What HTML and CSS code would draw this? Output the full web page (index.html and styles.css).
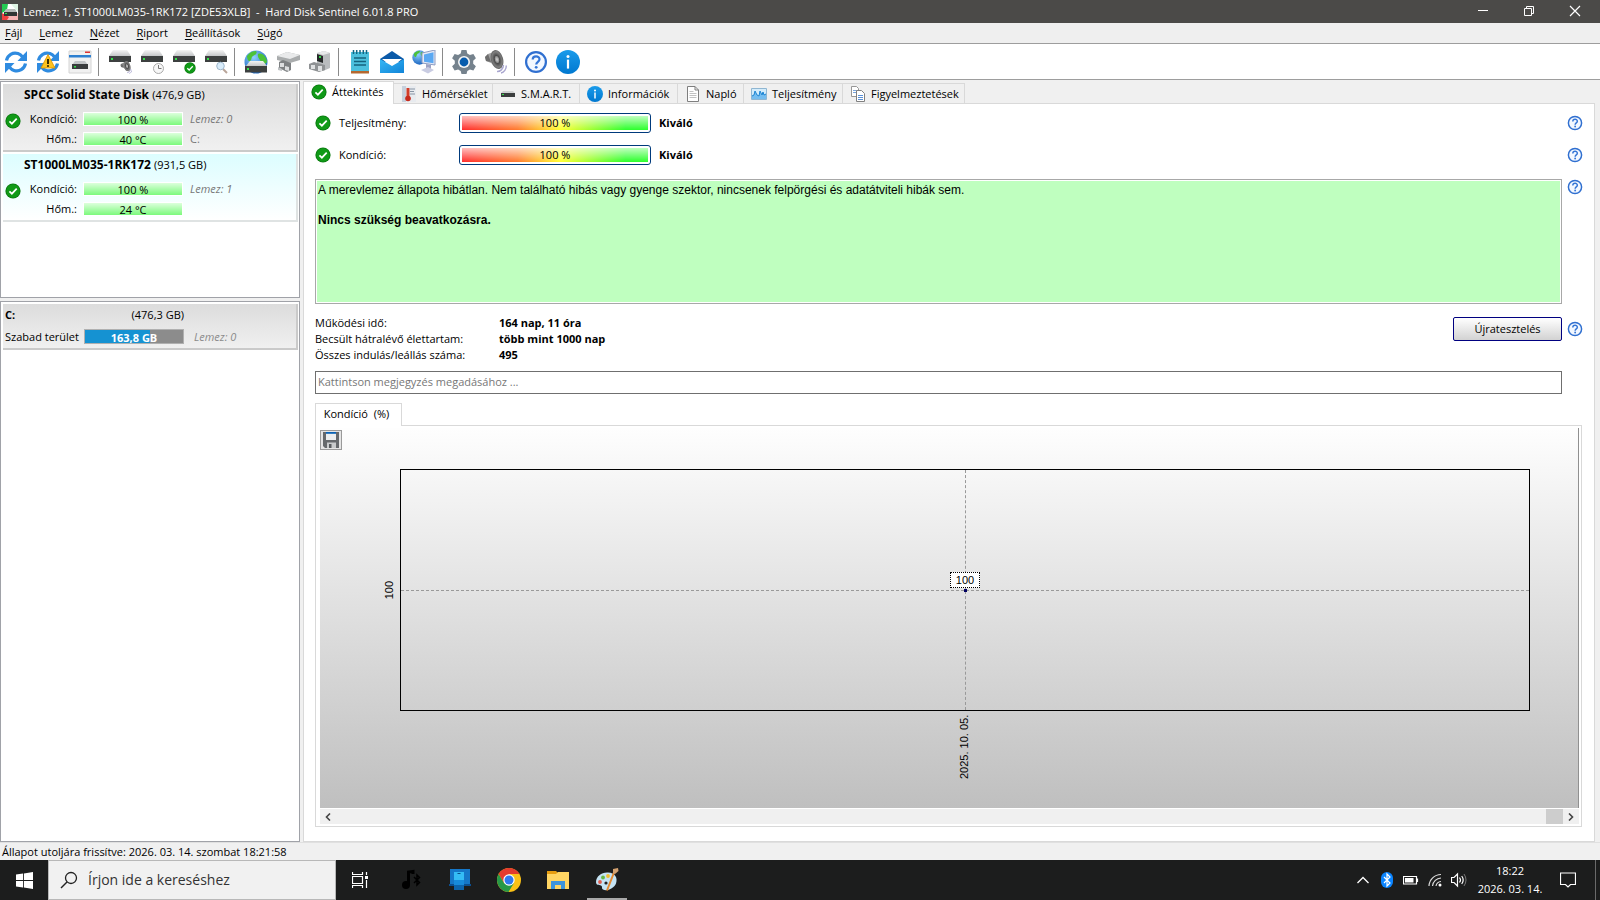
FILE: index.html
```html
<!DOCTYPE html>
<html lang="hu">
<head>
<meta charset="utf-8">
<title>Hard Disk Sentinel</title>
<link rel="stylesheet" href="styles.css">
</head>
<body>
<svg class="defs" aria-hidden="true">
  <defs>
    <linearGradient id="gTop" x1="0" y1="0" x2="0" y2="1"><stop offset="0" stop-color="#f4f4f4"/><stop offset="1" stop-color="#c4c6c8"/></linearGradient>
    <linearGradient id="gBlue" x1="0" y1="0" x2="0" y2="1"><stop offset="0" stop-color="#1a9bea"/><stop offset="1" stop-color="#0078d0"/></linearGradient>
    <linearGradient id="gMail" x1="0" y1="0" x2="1" y2="1"><stop offset="0" stop-color="#35b8f5"/><stop offset="1" stop-color="#1184d8"/></linearGradient>
    <radialGradient id="gGlobe" cx=".4" cy=".3" r=".8"><stop offset="0" stop-color="#8fd0ff"/><stop offset="1" stop-color="#0d58b8"/></radialGradient>
    <radialGradient id="gCone"><stop offset="0" stop-color="#d8d8d8"/><stop offset=".35" stop-color="#8b8b8b"/><stop offset=".45" stop-color="#4a4a4a"/><stop offset="1" stop-color="#909090"/></radialGradient>
  </defs>
  <symbol id="ok" viewBox="0 0 16 16"><circle cx="8" cy="8" r="7.6" fill="#0b7a10"/><circle cx="8" cy="8" r="6.7" fill="#109a17"/><path d="M4.4 8.3l2.5 2.4 4.8-5" fill="none" stroke="#fff" stroke-width="1.7"/></symbol>
  <symbol id="help" viewBox="0 0 24 24"><circle cx="12" cy="12" r="9.9" fill="#f3f8ff" stroke="#2f6fd0" stroke-width="2.2"/><path d="M8.7 9.6c0-4.2 6.8-4.2 6.8-.3 0 2.5-3.3 2.6-3.3 5.2" fill="none" stroke="#3475d6" stroke-width="2.2"/><circle cx="12.2" cy="17.3" r="1.4" fill="#3475d6"/></symbol>
  <symbol id="info" viewBox="0 0 24 24"><circle cx="12" cy="12" r="12" fill="url(#gBlue)"/><circle cx="12" cy="6.6" r="1.5" fill="#fff"/><path d="M12 9.6v9" stroke="#fff" stroke-width="2.2"/></symbol>
  <symbol id="disk" viewBox="0 0 24 24"><path d="M5 0h14l4 6H1z" fill="url(#gTop)"/><path d="M1 6h22v6H1z" fill="#3d4040"/><path d="M3 8h2v2H3z" fill="#35e04a"/></symbol>
  <symbol id="sync" viewBox="0 0 24 24"><path d="M2.500 10.500C3.500 5 9 1.800 14 3.600c2 .7 3.300 1.800 4.400 3.200" fill="none" stroke="#2f8be0" stroke-width="3.200"/><path d="M23 1v10H13.500z" fill="#2f8be0"/><path d="M21.500 13.500C20.500 19 15 22.200 10 20.400c-2-.7-3.300-1.800-4.400-3.200" fill="none" stroke="#2f8be0" stroke-width="3.200"/><path d="M1 23V13h9.500z" fill="#2f8be0"/></symbol>
  <symbol id="speaker" viewBox="0 0 24 24"><path d="M1 7l3-3 8-3 6 17-3 1-8-6-5-2z" fill="#a3a3a3"/><path d="M1 7l3-3 3 8-5-1z" fill="#6d6d6d"/><ellipse cx="13" cy="9.500" rx="5.500" ry="9" fill="url(#gCone)" stroke="#6c6c6c" stroke-width="1.200" transform="rotate(-16 13 9.500)"/><path d="M13 21.500c3 .3 6.500-2.500 6.500-6.500M17 23c3-.7 5.500-4 5.300-7.500" fill="none" stroke="#a9a6cf" stroke-width="1.400"/></symbol>
  <symbol id="globe" viewBox="0 0 24 24"><circle cx="12" cy="12" r="11.500" fill="url(#gGlobe)"/><path d="M3 6c3-4 6-5 9-5 2 2-1 4-3 5s-1 4-3 5-3-3-3-5zM14 4c4-2 9 3 9 8-2 3-5 3-6 0s-4-4-3-8z" fill="#4cc238"/></symbol>
  <symbol id="page" viewBox="0 0 16 16"><path d="M2.500.5h7.500l3.500 3.500v11.500h-11z" fill="#fff" stroke="#7f7f7f"/><path d="M10 .5v3.500h3.500" fill="none" stroke="#7f7f7f"/><path d="M4.500 5.500h4M4.500 7.500h7M4.500 9.500h7M4.500 11.500h7" stroke="#c2c2c2"/></symbol>
</svg>

<header class="titlebar">
  <svg class="app-icon" viewBox="0 0 16 16"><path d="M0 0h16v16H0z" fill="#fff"/><path d="M0 0h6L5 6 0 9z" fill="#24c952"/><path d="M0 16h16V9L6 12z" fill="#f7b5b5"/><path d="M0 9l7 4-2 3H0z" fill="#ef4040"/><path d="M9 0h7v8z" fill="#dff5e5"/><path d="M4 5h9l2 3H2z" fill="#b6b9b8"/><path d="M2 8h13v4H2z" fill="#313635"/><path d="M3 9h2v1H3z" fill="#35e04a"/></svg>
  <span class="title">Lemez: 1, ST1000LM035-1RK172 [ZDE53XLB]&nbsp; -&nbsp; Hard Disk Sentinel 6.01.8 PRO</span>
  <div class="window-buttons">
    <button aria-label="Kis méret"><svg viewBox="0 0 12 12"><path d="M1 5.500h10" stroke="#fff"/></svg></button>
    <button aria-label="Előző méret"><svg viewBox="0 0 12 12"><path d="M1.500 3.500h7v7h-7zM3.500 3.500v-2h7v7h-2" fill="none" stroke="#fff"/></svg></button>
    <button aria-label="Bezárás"><svg viewBox="0 0 12 12"><path d="M1 1l10 10M11 1L1 11" stroke="#fff" stroke-width="1.200"/></svg></button>
  </div>
</header>

<nav class="menubar">
  <button><u>F</u>ájl</button><button><u>L</u>emez</button><button><u>N</u>ézet</button><button><u>R</u>iport</button><button><u>B</u>eállítások</button><button><u>S</u>úgó</button>
</nav>

<div class="toolbar">
  <button aria-label="Frissítés"><svg viewBox="0 0 24 24"><use href="#sync"/></svg></button>
  <button aria-label="Gyors frissítés"><svg viewBox="0 0 24 24"><use href="#sync"/><path d="M12 4.500l7 13.500H5z" fill="#ffc31f" stroke="#d99100" stroke-width=".8"/><path d="M12 9v5" stroke="#3a2b00" stroke-width="2"/><circle cx="12" cy="16" r="1.100" fill="#3a2b00"/></svg></button>
  <button aria-label="Ablak"><svg viewBox="0 0 24 24"><path d="M1 1h22v22H1z" fill="#f1f1f1" stroke="#d4d4d4"/><path d="M1 5h22v2.500H1z" fill="#2d7fd0"/><path d="M17 1.500h5v1.500h-5z" fill="#d33"/><path d="M7 11h10l3 4H4z" fill="#c2c5c7"/><path d="M4 14h16v5H4z" fill="#3b3e3f"/><path d="M6 16h2v1.500H6z" fill="#35e04a"/></svg></button>
  <span class="sep"></span>
  <button aria-label="Lemez zaj"><svg viewBox="0 0 24 24"><use href="#disk"/><use href="#speaker" x="12" y="11" width="13" height="13"/></svg></button>
  <button aria-label="Lemez idő"><svg viewBox="0 0 24 24"><use href="#disk"/><circle cx="18.500" cy="18.500" r="5" fill="#f7f7f7" stroke="#a9a9a9"/><path d="M18.500 15v3.500h3" fill="none" stroke="#777"/></svg></button>
  <button aria-label="Lemez teszt"><svg viewBox="0 0 24 24"><use href="#disk"/><use href="#ok" x="12" y="12" width="12" height="12"/></svg></button>
  <button aria-label="Lemez vizsgálat"><svg viewBox="0 0 24 24"><use href="#disk"/><path d="M19 19l4 4" stroke="#b9a59a" stroke-width="2"/><circle cx="16.500" cy="16" r="3.800" fill="#d9edfb" stroke="#9fb7cc"/></svg></button>
  <span class="sep"></span>
  <button aria-label="Hálózat"><svg viewBox="0 0 24 24"><use href="#globe"/><path d="M6 11h13l4 5H2z" fill="url(#gTop)"/><path d="M1 16h22v6.500H1z" fill="#3d4040"/><path d="M3 18h2v2H3z" fill="#35e04a"/></svg></button>
  <button aria-label="Külső eszköz"><svg viewBox="0 0 24 24"><path d="M1 6l10-4 13 3v5l-10 3L1 10z" fill="#a9acad"/><path d="M1 6l10-4 13 3-10 4z" fill="#e9eaeb"/><path d="M3 12l4-2 8 3v7l-4 2-8-4z" fill="#7d8082"/><path d="M4 13h4v4H4zM9 16l4 1v4l-4-1z" fill="#dcdedf"/><path d="M2 17l4 2v2l-4-1z" fill="#bfc2c4"/></svg></button>
  <button aria-label="Csatlakozó"><svg viewBox="0 0 24 24"><path d="M9 3l7-2 6 2v15l-7 3-6-4z" fill="#b9bcbe"/><path d="M9 3l7-2 6 2-7 2z" fill="#e8e9ea"/><path d="M9 4l6 2v7l-6-2z" fill="#252828"/><path d="M11 6h2v2h-2z" fill="#35d04a"/><path d="M1 14l5-2 11 3v5l-6 2-10-3z" fill="#8f9294"/><path d="M3 15h4v4H3zM10 16h4v5h-4z" fill="#dfe1e2"/></svg></button>
  <span class="sep"></span>
  <button aria-label="Jelentés"><svg viewBox="0 0 24 24"><path d="M3 2h18v19H3z" fill="#4cc0dd"/><path d="M3 21h18v2.500H3z" fill="#b5682f"/><path d="M6 8h12M6 11.500h12M6 15h12" stroke="#15637e" stroke-width="1.400"/><path d="M5.500 0v4M8.700 0v4M12 0v4M15.300 0v4M18.500 0v4" stroke="#116684" stroke-width="1.500"/></svg></button>
  <button aria-label="E-mail"><svg viewBox="0 0 24 24"><path d="M0 9l12-8 12 8v3H0z" fill="#0b5aa8"/><path d="M2 9h20l-10 8z" fill="#fff"/><path d="M0 9l12 7 12-7v14H0z" fill="url(#gMail)"/></svg></button>
  <button aria-label="Távoli gép"><svg viewBox="0 0 24 24"><use href="#globe" width="15" height="15"/><path d="M10 3l13-3v15l-13-2z" fill="#e5e9f6" stroke="#8d9cc2"/><path d="M12 4.500l9.500-2.300v11l-9.500-1.500z" fill="#5aa8f2"/><path d="M14 14l5 1v4l-5-1z" fill="#9da2c4"/><path d="M9 20l7-3 6 3-6 3.500z" fill="#c9cce2"/></svg></button>
  <span class="sep"></span>
  <button aria-label="Beállítások"><svg viewBox="0 0 24 24"><path d="M9.500 0h5l.8 3.600 2.600 1.500 3.500-1.100 2.500 4.300-2.700 2.500v3l2.700 2.500-2.500 4.300-3.500-1.100-2.600 1.500-.8 3h-5l-.8-3-2.600-1.500-3.500 1.100-2.500-4.300 2.700-2.500v-3L.1 8.300 2.600 4l3.500 1.100 2.600-1.500z" fill="#75828d"/><circle cx="12" cy="12" r="6" fill="#f5f5f5"/><circle cx="12" cy="12" r="4.400" fill="#075cad"/></svg></button>
  <button aria-label="Hang"><svg viewBox="0 0 24 24"><use href="#speaker"/></svg></button>
  <span class="sep"></span>
  <button aria-label="Súgó"><svg viewBox="0 0 24 24"><use href="#help"/></svg></button>
  <button aria-label="Névjegy"><svg viewBox="0 0 24 24"><use href="#info"/></svg></button>
</div>

<div class="workspace">
  <aside class="sidebar">
    <section class="panel disks">
      <article class="card">
        <h2>SPCC Solid State Disk <span>(476,9 GB)</span></h2>
        <div class="card-body">
          <svg class="i16"><use href="#ok"/></svg>
          <div class="metrics">
            <span class="name">Kondíció:</span><span class="meter">100 %</span><i>Lemez: 0</i>
            <span class="name">Hőm.:</span><span class="meter">40 °C</span><b>C:</b>
          </div>
        </div>
      </article>
      <article class="card selected">
        <h2>ST1000LM035-1RK172 <span>(931,5 GB)</span></h2>
        <div class="card-body">
          <svg class="i16"><use href="#ok"/></svg>
          <div class="metrics">
            <span class="name">Kondíció:</span><span class="meter">100 %</span><i>Lemez: 1</i>
            <span class="name">Hőm.:</span><span class="meter">24 °C</span>
          </div>
        </div>
      </article>
    </section>
    <section class="panel volumes">
      <article class="card volume">
        <b>C:</b><span class="capacity">(476,3 GB)</span><span></span>
        <span>Szabad terület</span><span class="usage">163,8 GB</span><i>Lemez: 0</i>
      </article>
    </section>
  </aside>

  <main class="content">
    <div class="tabs" role="tablist">
      <button class="tab t1 active" role="tab" aria-selected="true"><svg class="i16"><use href="#ok"/></svg>Áttekintés</button>
      <button class="tab t2" role="tab"><svg class="i16" viewBox="0 0 16 16"><path d="M1 0h14v16H1z" fill="#e8ebef"/><path d="M1 0h4v16H1z" fill="#c6d0dc"/><path d="M9 3h5M9 5.500h4M9 8h5" stroke="#8895a5"/><path d="M7 2v10" stroke="#d23c28" stroke-width="3"/><circle cx="7" cy="12.500" r="2.800" fill="#c62a1c"/></svg>Hőmérséklet</button>
      <button class="tab t3" role="tab"><svg class="i16" viewBox="0 0 16 16"><path d="M3 5h10l2 2H1z" fill="#cfd1d1"/><path d="M1 7h14v4H1z" fill="#3b3e3e"/><path d="M2 8h2v1H2z" fill="#35e04a"/></svg>S.M.A.R.T.</button>
      <button class="tab t4" role="tab"><svg class="i16"><use href="#info" width="16" height="16"/></svg>Információk</button>
      <button class="tab t5" role="tab"><svg class="i16"><use href="#page"/></svg>Napló</button>
      <button class="tab t6" role="tab"><svg class="i16" viewBox="0 0 16 16"><path d="M.5 2.500h15v11H.5z" fill="#d3ecfb" stroke="#8fb6d2"/><path d="M1 10l2-1 1-4 2 4 2 1 1-5 2 4 1-3 1 3 2-1v5H1z" fill="#74bdf0"/><path d="M1 10l2-1 1-4 2 4 2 1 1-5 2 4 1-3 1 3 2-1" fill="none" stroke="#1b84d3"/></svg>Teljesítmény</button>
      <button class="tab t7" role="tab"><svg class="i16" viewBox="0 0 16 16"><path d="M1.500.5h5l2 2v8h-7z" fill="#fff" stroke="#989898"/><path d="M3 4.500h4M3 6.500h4" stroke="#79a6dd"/><path d="M6.500 4.500h5l3 3v8h-8z" fill="#fff" stroke="#808080"/><path d="M8 9.500h5M8 11.500h5M8 13.500h5" stroke="#5a90d6"/></svg>Figyelmeztetések</button>
    </div>

    <div class="page">
      <div class="rating">
        <svg class="i16"><use href="#ok"/></svg><span class="label">Teljesítmény:</span><div class="gauge"><span>100 %</span></div><b>Kiváló</b>
        <button class="help" aria-label="Súgó"><svg class="i16"><use href="#help"/></svg></button>
      </div>
      <div class="rating">
        <svg class="i16"><use href="#ok"/></svg><span class="label">Kondíció:</span><div class="gauge"><span>100 %</span></div><b>Kiváló</b>
        <button class="help" aria-label="Súgó"><svg class="i16"><use href="#help"/></svg></button>
      </div>
      <div class="row">
        <div class="message"><p>A merevlemez állapota hibátlan. Nem található hibás vagy gyenge szektor, nincsenek felpörgési és adatátviteli hibák sem.</p><p><b>Nincs szükség beavatkozásra.</b></p></div>
        <button class="help" aria-label="Súgó"><svg class="i16"><use href="#help"/></svg></button>
      </div>
      <div class="row facts-row">
        <dl class="facts">
          <dt>Működési idő:</dt><dd>164 nap, 11 óra</dd>
          <dt>Becsült hátralévő élettartam:</dt><dd>több mint 1000 nap</dd>
          <dt>Összes indulás/leállás száma:</dt><dd>495</dd>
        </dl>
        <button class="retest">Újratesztelés</button>
        <button class="help retest-help" aria-label="Súgó"><svg class="i16"><use href="#help"/></svg></button>
      </div>
      <input class="comment" type="text" aria-label="Megjegyzés" placeholder="Kattintson megjegyzés megadásához ...">

      <div class="chart-area">
        <button class="chart-tab">Kondíció&nbsp; (%)</button>
        <div class="chart-frame">
          <div class="chart">
            <button class="save" aria-label="Mentés"><svg viewBox="0 0 16 16"><path d="M0 0h16v16H2l-2-2z" fill="#66696c"/><path d="M3 0h10v8H3z" fill="#eceeef"/><path d="M3 0h10v1.800H3z" fill="#0a62b5"/><path d="M4 10.500h9V16H4z" fill="#c9cbcc"/><path d="M6 12h2.500v4H6z" fill="#585b5e"/></svg></button>
            <div class="plot-row">
              <span class="vertical y-label">100</span>
              <div class="plot">
                <span class="h-line"></span><span class="v-line"></span><span class="point"></span><span class="value">100</span>
              </div>
            </div>
            <div class="x-axis"><span class="vertical">2025. 10. 05.</span></div>
          </div>
          <div class="scrollbar">
            <button aria-label="Balra"><svg viewBox="0 0 8 8"><path d="M6 .5L2.500 4 6 7.500" fill="none" stroke="#444" stroke-width="1.600"/></svg></button>
            <span class="thumb"></span>
            <button aria-label="Jobbra"><svg viewBox="0 0 8 8"><path d="M2 .5L5.500 4 2 7.500" fill="none" stroke="#444" stroke-width="1.600"/></svg></button>
          </div>
        </div>
      </div>
    </div>
  </main>
</div>

<footer class="statusbar">Állapot utoljára frissítve: 2026. 03. 14. szombat 18:21:58</footer>

<div class="taskbar">
  <button class="start" aria-label="Start"><svg viewBox="0 0 16 16"><path d="M0 2.300L6.600 1.400v6.200H0zM7.400 1.300L16 0v7.600H7.400zM0 8.400h6.600v6.200L0 13.700zM7.400 8.400H16V16l-8.600-1.300z" fill="#fff"/></svg></button>
  <label class="search"><svg viewBox="0 0 18 18"><circle cx="11" cy="7" r="5.500" fill="none" stroke="#222" stroke-width="1.300"/><path d="M7 11l-6 6" stroke="#222" stroke-width="1.400"/></svg><input type="text" aria-label="Keresés" placeholder="Írjon ide a kereséshez"></label>
  <div class="apps">
    <button class="task-view" aria-label="Feladatnézet"><svg class="i16" viewBox="0 0 16 16"><path d="M.5 4.500h10v7H.5zM.5 0v2.500h10V0M.5 16v-2.500h10V16M14.500 0v3M14.500 8v8" fill="none" stroke="#fff" stroke-width="1.200"/><path d="M13 4h3v3h-3z" fill="#fff"/></svg></button>
    <button aria-label="Zene"><svg viewBox="0 0 24 24"><path d="M9.500 17V4l4.500-.5v2.500" fill="none" stroke="#000" stroke-width="3"/><circle cx="7" cy="17" r="4" fill="#000"/><path d="M15 9l5.500 5.500L18 17V7l2.500 2.500L15 15" fill="none" stroke="#000" stroke-width="1.500"/></svg></button>
    <button aria-label="Telefon"><svg viewBox="0 0 24 24"><path d="M2 1h20v16H2z" fill="#1577c8"/><path d="M1 16h22v2H1z" fill="#0b4f91"/><path d="M6 4h10v18H6z" fill="#34bdf5"/><path d="M6 12h10v10H6z" fill="#178bdc"/><path d="M6 17h10v5H6z" fill="#0d64ac"/><path d="M9.500 5.500h3" stroke="#075288"/></svg></button>
    <button aria-label="Chrome"><svg viewBox="0 0 24 24"><circle cx="12" cy="12" r="12" fill="#fbc116"/><path d="M1.600 6A12 12 0 0 1 22.400 6H12L7 15z" fill="#e33b2e"/><path d="M1.600 6A12 12 0 0 0 11.500 24L17 15l-5 2-5-2z" fill="#279847"/><circle cx="12" cy="12" r="5.700" fill="#fff"/><circle cx="12" cy="12" r="4.500" fill="#2f79ed"/></svg></button>
    <button aria-label="Fájlkezelő"><svg viewBox="0 0 24 24"><path d="M1 3h9l2 2v4H1z" fill="#e69d10"/><path d="M1 6h9l2-2h11v17H1z" fill="#ffd563"/><path d="M5 13h14v8h-4v-4H9v4H5z" fill="#3d94dc"/></svg></button>
    <button class="running" aria-label="Paint"><svg viewBox="0 0 24 24"><path d="M1 14C1 8 7 4 13 4.500c7 .5 10 5 8 11-2 5-9 8-13 6-2-1 0-3-2-4s-5 0-5-3.500z" fill="#c5e3f3"/><circle cx="5" cy="14" r="1.900" fill="#e25e4e"/><circle cx="8" cy="9.500" r="1.900" fill="#66b846"/><circle cx="13" cy="8" r="1.900" fill="#f2bd2e"/><circle cx="11" cy="15" r="1.600" fill="#222"/><path d="M12 22.500l7-18" stroke="#e58a31" stroke-width="2"/><path d="M18 1l5-1 .5 3-3.500 3-2-1z" fill="#d3a170"/></svg></button>
  </div>
  <div class="tray">
    <button aria-label="Rejtett ikonok"><svg class="i16" viewBox="0 0 16 16"><path d="M2.500 11L8 5.500l5.500 5.500" fill="none" stroke="#fff" stroke-width="1.300"/></svg></button>
    <button aria-label="Bluetooth"><svg class="i16" viewBox="0 0 16 16"><rect x="2" width="12" height="16" rx="6" fill="#0a84ff"/><path d="M5 5l6 6-3 3V2l3 3-6 6" fill="none" stroke="#fff" stroke-width="1.200"/></svg></button>
    <button aria-label="Akkumulátor"><svg class="i16" viewBox="0 0 16 16"><path d="M.5 4.500h13v7.500H.5zM14.500 6.500v3.500" fill="none" stroke="#fff" stroke-width="1.200"/><path d="M2 6h8.500v4.500H2z" fill="#fff"/></svg></button>
    <button aria-label="Wi-Fi"><svg class="i16" viewBox="0 0 16 16"><path d="M2 14A12 12 0 0 1 14 2.500M5.500 14A9 9 0 0 1 14 6M9 14a5.500 5.500 0 0 1 5-4.500" fill="none" stroke="#ddd" stroke-width="1.200"/><circle cx="13" cy="13" r="1.500" fill="#fff"/></svg></button>
    <button aria-label="Hangerő"><svg class="i16" viewBox="0 0 16 16"><path d="M.5 5.500h2.500l3.500-3.500v12L3 10.500H.5z" fill="none" stroke="#fff" stroke-width="1.200"/><path d="M8.500 5.500q2 2.500 0 5M10.700 4q3 4 0 8" fill="none" stroke="#fff" stroke-width="1.200"/><path d="M13 2q4 6 0 12" fill="none" stroke="#777"/></svg></button>
    <div class="clock"><time>18:22</time><time>2026. 03. 14.</time></div>
    <button class="notes" aria-label="Értesítések"><svg class="i16" viewBox="0 0 16 16"><path d="M.5 1h15v11.500h-5L8 15l-2.500-2.500h-5z" fill="none" stroke="#fff" stroke-width="1.200"/></svg></button>
  </div>
</div>
</body>
</html>
```

FILE: styles.css
```css
* { box-sizing: border-box; }
body {
  margin: 0;
  height: 100vh;
  display: flex;
  flex-direction: column;
  overflow: hidden;
  background: #f0f0f0;
  color: #000;
  font: 11px/16px "Open Sans", "Noto Sans", sans-serif;
}
button {
  display: flex;
  align-items: center;
  justify-content: center;
  padding: 0;
  border: 0;
  background: none;
  color: inherit;
  font: inherit;
  white-space: nowrap;
}
.defs { position: absolute; width: 0; height: 0; }
.i16 { width: 16px; height: 16px; flex: none; }

.titlebar {
  display: flex;
  align-items: center;
  gap: 5px;
  height: 23px;
  padding: 0 2px;
  background: #4b4a48;
  color: #fff;
}
.app-icon { width: 16px; height: 16px; }
.window-buttons { display: flex; margin-left: auto; align-self: stretch; }
.window-buttons button { width: 46px; padding-bottom: 2px; }
.window-buttons svg { width: 12px; height: 12px; }

.menubar { display: flex; height: 20px; padding-left: 5px; gap: 17px; background: #efefef; }
.menubar u { text-underline-offset: 2px; }

.toolbar {
  display: flex;
  align-items: center;
  height: 37px;
  background: #fff;
  border-top: 1px solid #9d9d9d;
  border-bottom: 1px solid #9d9d9d;
}
.toolbar button { width: 32px; height: 32px; }
.toolbar svg { width: 24px; height: 24px; }
.sep { width: 8px; height: 28px; padding-left: 2px; }
.sep::before { content: ""; display: block; width: 1px; height: 100%; background: #8a8a8a; }

.workspace { flex: 1; min-height: 0; display: flex; gap: 3px; padding-top: 1px; }
.sidebar { width: 300px; display: flex; flex-direction: column; gap: 3px; }
.panel { background: #fff; border: 1px solid #a0a2a8; padding: 2px 1px 2px 2px; }
.disks { height: 217px; display: flex; flex-direction: column; gap: 2px; }
.volumes { flex: 1; }
.card {
  height: 68px;
  border-right: 2px solid #cacaca;
  border-bottom: 2px solid #cacaca;
  background: linear-gradient(#dcdcdc, #f0f0f0);
}
.card.selected { background: linear-gradient(#dcfdff, #fff); border-color: #dfe3e3; }
.card h2 { margin: 0; padding: 2px 0 0 21px; font-size: 12px; line-height: 18px; font-weight: 700; white-space: nowrap; }
.card h2 span { font-weight: 400; font-size: 11px; }
.card-body { display: flex; padding: 7px 0 0 2px; }
.card-body .i16 { margin-top: 2px; }
.metrics { display: grid; grid-template-columns: 56px 100px 1fr; column-gap: 6px; row-gap: 4px; align-items: center; }
.name { text-align: right; }
.card i { color: #8a8a8a; }
.metrics i, .metrics b { padding-left: 1px; font-weight: 400; color: #777; }
.meter {
  height: 14px;
  border: 1px solid #fff;
  background: linear-gradient(#dcffdc, #7cf97c);
  line-height: 14px;
  text-align: center;
}
.card.volume {
  height: 46px;
  display: grid;
  grid-template-columns: 74px 100px 1fr;
  column-gap: 5px;
  row-gap: 6px;
  align-content: start;
  padding: 3px 0 0 2px;
  background: linear-gradient(#dcdcdc, #f0f0f0);
  white-space: nowrap;
}
.volume .capacity { text-align: right; }
.volume i { padding-left: 5px; }
.usage {
  height: 15px;
  border: 1px solid #b0b0b0;
  background: linear-gradient(90deg, #1592d2 66%, #8c8c8c 66%);
  color: #fff;
  font-weight: 700;
  line-height: 15px;
  text-align: center;
}

.content { flex: 1; min-width: 0; display: flex; flex-direction: column; padding-right: 5px; }
.tabs { display: flex; align-items: flex-end; height: 22px; }
.tab {
  height: 20px;
  justify-content: flex-start;
  gap: 5px;
  padding-left: 7px;
  border: 1px solid #d9d9d9;
  border-width: 1px 1px 0 0;
}
.tab.active { height: 23px; margin-bottom: -1px; background: #fff; border-left-width: 1px; padding-bottom: 3px; z-index: 1; }
.t1 { width: 91px; }
.t2, .t6 { width: 99px; }
.t3 { width: 87px; }
.t4 { width: 98px; }
.t5 { width: 66px; }
.t7 { width: 122px; }
.page {
  flex: 1;
  min-height: 0;
  display: flex;
  flex-direction: column;
  padding: 3px 11px 14px;
  background: #fff;
  border: 1px solid #d9d9d9;
}
.rating { display: flex; align-items: center; height: 32px; }
.label { width: 128px; padding-left: 8px; }
.gauge {
  width: 192px;
  height: 20px;
  padding: 2px;
  margin-right: 8px;
  border: 1px solid #003a7c;
  border-radius: 3px;
  background: #fff;
}
.gauge span {
  display: block;
  line-height: 14px;
  text-align: center;
  background: linear-gradient(rgba(255, 255, 255, .7), rgba(255, 255, 255, 0)), linear-gradient(90deg, #ff2a2a, #ff7a2c 30%, #ffff30 53%, #2cff2c 88%);
}
.help { margin-left: auto; width: 16px; height: 16px; flex: none; }
.row { display: flex; gap: 5px; align-items: flex-start; margin-top: 8px; }
.message {
  flex: 1;
  height: 125px;
  padding: 3px 2px;
  border: 1px solid #a8a8a8;
  outline: 1px solid #fff;
  outline-offset: -2px;
  background: #bfffbf;
  font: 12px/15px "Liberation Sans", Arial, sans-serif;
}
.message p { margin: 0 0 15px; }
.facts-row { margin-top: 11px; }
.facts { flex: 1; margin: 0; display: grid; grid-template-columns: 184px 1fr; }
.facts dd { margin: 0; font-weight: 700; }
.retest {
  width: 109px;
  height: 24px;
  margin-top: 2px;
  border: 1px solid #000080;
  border-radius: 2px;
  background: linear-gradient(#fff, #d2d2d2);
}
.retest-help { margin-top: 6px; }
.comment {
  height: 23px;
  margin: 8px 21px 0 0;
  padding: 0 2px 2px;
  border: 1px solid #6f6f6f;
  background: #fff;
  font: inherit;
}
.comment::placeholder { color: #777; opacity: 1; }
.chart-area { flex: 1; min-height: 0; display: flex; flex-direction: column; margin: 9px 1px 0 0; }
.chart-tab { width: 87px; height: 23px; margin-bottom: -1px; padding: 0 4px 2px 0; z-index: 1; border: 1px solid #d9d9d9; border-bottom: 0; background: #fff; }
.chart-frame { flex: 1; min-height: 0; display: flex; flex-direction: column; padding: 2px 2px 2px 4px; border: 1px solid #d9d9d9; }
.chart {
  flex: 1;
  min-height: 0;
  display: flex;
  flex-direction: column;
  border-right: 1px solid #909090;
  background: linear-gradient(#fefefe, #bfbfbf);
  font: 11px/14px "Liberation Sans", Arial, sans-serif;
}
.save { width: 22px; height: 20px; margin-top: 2px; border: 1px solid #9a9a9a; background: #e5e5e5; }
.save svg { width: 16px; height: 16px; }
.plot-row { flex: 1; min-height: 0; display: flex; align-items: center; justify-content: flex-end; margin: 19px 48px 0 62px; }
.vertical { writing-mode: vertical-rl; transform: rotate(180deg); white-space: nowrap; }
.y-label { margin-right: 4px; }
.plot { position: relative; flex: 1; align-self: stretch; border: 1px solid #000; }
.h-line { position: absolute; left: 0; right: 0; top: 50%; border-top: 1px dashed #999; }
.v-line { position: absolute; top: 0; bottom: 0; left: 50%; border-left: 1px dashed #999; }
.point { position: absolute; left: calc(50% - 1px); top: calc(50% - 1px); width: 3px; height: 3px; background: #000060; }
.value {
  position: absolute;
  left: calc(50% - 15px);
  bottom: calc(50% + 2px);
  width: 30px;
  border: 1px dotted #000;
  background: #fff;
  text-align: center;
}
.x-axis { height: 97px; display: flex; justify-content: center; margin: 0 50px 0 80px; padding-top: 2px; }
.x-axis .vertical { height: 66px; }
.scrollbar { height: 15px; display: flex; align-items: stretch; margin-top: 1px; background: #f0f0f0; }
.scrollbar button { width: 16px; }
.scrollbar svg { width: 8px; height: 8px; }
.thumb { width: 17px; margin-left: auto; background: #cdcdcd; }

.statusbar { height: 18px; padding: 1px 0 0 2px; border-top: 1px solid #e0e0e0; }

.taskbar { display: flex; height: 40px; background: #1c1d1d; color: #fff; font-size: 12px; }
.start { width: 48px; }
.start svg { width: 17px; height: 17px; }
.search { width: 288px; display: flex; align-items: center; gap: 10px; padding-left: 11px; background: #f1f1f1; border: 1px solid #b8b8b8; }
.search svg { width: 18px; height: 18px; }
.search input { flex: 1; min-width: 0; padding: 0; border: 0; outline: 0; background: none; font: 14px/20px "Open Sans", "Noto Sans", sans-serif; }
.search input::placeholder { color: #333; opacity: 1; }
.apps { display: flex; gap: 1px; }
.apps button { width: 48px; }
.apps .task-view { margin-right: 2px; }
.apps svg:not(.i16) { width: 24px; height: 24px; }
.apps .running { background: linear-gradient(#a9a9a9, #a9a9a9) bottom / 40px 2px no-repeat; }
.tray { display: flex; margin-left: auto; padding-right: 4px; }
.tray button { width: 24px; }
.clock { width: 78px; display: flex; flex-direction: column; align-items: center; padding-top: 2px; line-height: 18px; font-size: 11px; white-space: nowrap; }
.tray .notes { width: 46px; padding-right: 9px; }
.tray::after { content: ""; width: 1px; background: #6a6a6a; }
```
